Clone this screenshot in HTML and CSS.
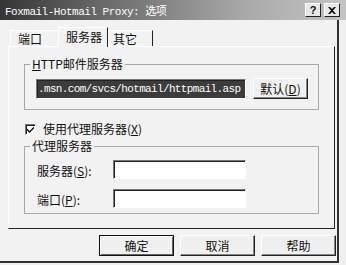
FILE: index.html
```html
<!DOCTYPE html>
<html lang="zh-CN">
<head>
  <meta charset="UTF-8">
  <title>Foxmail-Hotmail Proxy: 选项</title>
  <link rel="stylesheet" href="styles.css">
</head>
<body>
  <div class="titlebar">
    <span class="title">Foxmail-Hotmail Proxy: 选项</span>
    <div class="caption-btns">
      <span class="cap-btn help">?</span>
      <span class="cap-btn">
        <svg width="8" height="7" viewBox="0 0 8 7"><path d="M0 0h2l2 2 2-2h2L5 3.5 8 7H6L4 5 2 7H0l3-3.5z" fill="#111"/></svg>
      </span>
    </div>
  </div>

  <div class="dialog">
    <div class="tabs">
      <span class="tab first">端口</span>
      <span class="tab active">服务器</span>
      <span class="tab last">其它</span>
    </div>

    <div class="panel">
      <fieldset class="group http">
        <legend><u>H</u>TTP邮件服务器</legend>
        <div class="row">
          <div class="field selected">.msn.com/svcs/hotmail/httpmail.asp</div>
          <button class="btn small">默认(<u>D</u>)</button>
        </div>
      </fieldset>

      <label class="check">
        <span class="box">
          <svg width="7" height="7" viewBox="0 0 7 7"><path d="M0 2.5l2.5 2.5L7 0.5v2L2.5 7 0 4.5z" fill="#111"/></svg>
        </span>
        使用代理服务器(<u>X</u>)
      </label>

      <fieldset class="group proxy">
        <legend>代理服务器</legend>
        <div class="row">
          <span class="lbl">服务器(<u>S</u>):</span>
          <div class="field short"></div>
        </div>
        <div class="row">
          <span class="lbl">端口(<u>P</u>):</span>
          <div class="field short"></div>
        </div>
      </fieldset>
    </div>

    <div class="actions">
      <button class="btn default">确定</button>
      <button class="btn">取消</button>
      <button class="btn">帮助</button>
    </div>
  </div>
</body>
</html>
```

FILE: styles.css
```css
body {
  margin: 0;
  background: #f0f0f0;
  font-family: "Noto Sans CJK SC", sans-serif;
  font-size: 12px;
  line-height: 14px;
  color: #111;
}

u {
  text-decoration: underline;
}

.titlebar {
  width: 346px;
  height: 20px;
  display: flex;
  align-items: center;
  justify-content: space-between;
  background: linear-gradient(to right, #353535, #6a6a6a 30%, #a8a8a8 70%, #c4c4c4);
}

.title {
  padding: 3px 0 0 5px;
  font-family: "Liberation Mono", "Noto Sans CJK SC", monospace;
  font-size: 11px;
  letter-spacing: -0.5px;
  color: #fff;
}

.caption-btns {
  display: flex;
  gap: 3px;
  margin-right: 6px;
}

.cap-btn {
  width: 14px;
  height: 12px;
  display: flex;
  align-items: center;
  justify-content: center;
  background: #e8e8e8;
  border: 1px solid;
  border-color: #fff #222 #222 #fff;
  font-family: "Liberation Sans", sans-serif;
  font-weight: bold;
  font-size: 11px;
  line-height: 12px;
}

.dialog {
  width: 339px;
  height: 243px;
  box-sizing: border-box;
  border-right: 2px solid #333;
  border-bottom: 2px solid #333;
  background: #f2f2f2;
}

.tabs {
  height: 26px;
  display: flex;
  align-items: flex-end;
  padding-left: 10px;
}

.tab {
  box-sizing: border-box;
  height: 16px;
  padding: 1px 0 0 7px;
  border-top: 1px solid #fff;
  border-left: 1px solid #fff;
}

.tab.first {
  width: 48px;
}

.tab.active {
  width: 50px;
  height: 20px;
  margin-bottom: -1px;
  padding-top: 2px;
  background: #f2f2f2;
  border-right: 1px solid #222;
  position: relative;
}

.tab.last {
  width: 45px;
  padding-left: 4px;
  border-right: 1px solid #222;
}

.panel {
  width: 327px;
  height: 183px;
  box-sizing: border-box;
  margin-left: 8px;
  padding: 11px 0 0 15px;
  border-top: 1px solid #fff;
  border-left: 1px solid #fff;
  border-right: 1px solid #222;
  border-bottom: 1px solid #222;
}

.group {
  width: 295px;
  box-sizing: border-box;
  margin: 0;
  padding: 8px 10px 10px 11px;
  border: 1px solid #a8a8a8;
}

.group legend {
  margin-left: -6px;
  padding: 0 2px;
  line-height: 12px;
}

.group.proxy {
  margin-top: 4px;
  padding-bottom: 5px;
}

.row {
  display: flex;
  align-items: center;
}

.proxy .row + .row {
  margin-top: 10px;
}

.field {
  box-sizing: border-box;
  height: 20px;
  background: #fff;
  border: 1px solid;
  border-color: #777 #fff #fff #777;
  box-shadow: inset 1px 1px 0 #222;
}

.field.selected {
  width: 210px;
  padding: 3px 0 0 1px;
  overflow: hidden;
  white-space: nowrap;
  background: #3c3c3c;
  color: #fff;
  font-family: "Liberation Mono", monospace;
  font-size: 11px;
  line-height: 12px;
  letter-spacing: -0.65px;
}

.field.short {
  width: 133px;
  height: 19px;
}

.lbl {
  width: 76px;
  padding: 2px 0 0 1px;
}

.check {
  display: flex;
  align-items: center;
  margin: 12px 0 0 1px;
}

.box {
  width: 11px;
  height: 11px;
  box-sizing: border-box;
  display: flex;
  align-items: center;
  justify-content: center;
  margin-right: 7px;
  background: #fff;
  border: 1px solid;
  border-color: #777 #fff #fff #777;
  box-shadow: inset 1px 1px 0 #222;
}

.btn {
  box-sizing: border-box;
  height: 21px;
  padding: 0;
  background: #f0f0f0;
  border: 1px solid;
  border-color: #fff #222 #222 #fff;
  box-shadow: inset -1px -1px 0 #888;
  font-family: "Noto Sans CJK SC", sans-serif;
  font-size: 12px;
  color: #111;
}

.btn.small {
  width: 55px;
  margin-left: 7px;
}

.actions {
  display: flex;
  justify-content: flex-end;
  gap: 6px;
  margin-top: 6px;
  padding-right: 1px;
}

.actions .btn {
  width: 75px;
}

.btn.default {
  border-color: #111;
  box-shadow: inset 1px 1px 0 #fff, inset -1px -1px 0 #666;
}
```
